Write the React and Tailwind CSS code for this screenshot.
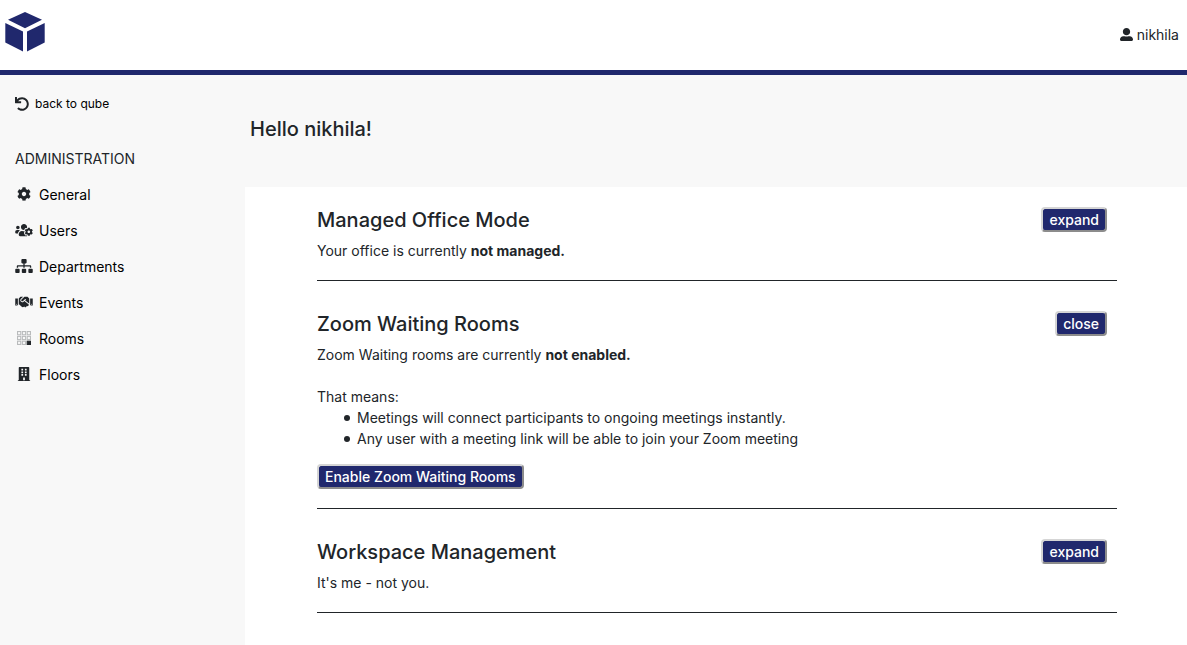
import React from 'react';
import { FaUndo, FaUserAlt, FaCog, FaUsersCog, FaSitemap, FaHandshake, FaBuilding } from 'react-icons/fa';

function Logo() {
  return (
    <svg viewBox="0 0 40 40" className="size-10 fill-[#20286d]" aria-hidden="true">
      <path d="M20 0 37 7.8 20 16.2 3 7.8Z" />
      <path d="M0.3 11 18 19.6V39.6L0.3 30.4Z" />
      <path d="M39.7 11 22 19.6V39.6L39.7 30.4Z" />
    </svg>
  );
}

function RoomsIcon({ className }) {
  const cells = [0.5, 5, 9.5];
  return (
    <svg viewBox="0 0 13 13" className={className} aria-hidden="true">
      {cells.map((y) =>
        cells.map((x) => {
          const filled = x === 9.5 && y === 9.5;
          return (
            <rect
              key={`${x}-${y}`}
              x={x}
              y={y}
              width="3"
              height="3"
              fill={filled ? '#212529' : 'none'}
              stroke={filled ? '#212529' : '#b9bbbc'}
              strokeWidth="1"
            />
          );
        }),
      )}
    </svg>
  );
}

const links = [
  { label: 'General', Icon: FaCog, size: 'size-[14px]' },
  { label: 'Users', Icon: FaUsersCog, size: 'h-[14px] w-[18px]' },
  { label: 'Departments', Icon: FaSitemap, size: 'h-[14px] w-[18px]' },
  { label: 'Events', Icon: FaHandshake, size: 'h-[14px] w-[18px]' },
  { label: 'Rooms', Icon: RoomsIcon, size: 'size-[14px]' },
  { label: 'Floors', Icon: FaBuilding, size: 'h-[14px] w-[14px]' },
];

function Button({ children }) {
  return (
    <button
      type="button"
      className="h-[25px] shrink-0 rounded border-2 border-t-[#d5d5d5] border-r-[#8c8c8c] border-b-[#8c8c8c] border-l-[#d5d5d5] bg-[#20286d] px-[6px] text-sm leading-[21px] font-medium text-white"
    >
      {children}
    </button>
  );
}

function Bullet({ children }) {
  return (
    <li className="flex items-center gap-[7px]">
      <span className="size-[6px] rounded-full bg-[#212529]" />
      {children}
    </li>
  );
}

function Section({ title, action, children }) {
  return (
    <section className="border-b border-[#212529] pt-[30px] pb-[19px] first:pt-5">
      <div className="mb-[7px] flex h-[26px] items-start justify-between pr-[10px]">
        <h2 className="text-xl leading-[27px] font-medium">{title}</h2>
        <Button>{action}</Button>
      </div>
      {children}
    </section>
  );
}

export default function App() {
  return (
    <div className="flex min-h-screen flex-col bg-[#f8f8f8] font-['Inter','Liberation_Sans',sans-serif] text-sm leading-[21px] text-[#212529]">
      <header className="flex h-[75px] items-center justify-between border-b-[5px] border-[#20286d] bg-white pr-2 pb-[6px] pl-[5px]">
        <a href="#home" aria-label="qube">
          <Logo />
        </a>
        <a href="#profile" className="flex items-center gap-1 pt-1">
          <FaUserAlt className="size-[13px]" />
          nikhila
        </a>
      </header>
      <div className="flex flex-1">
        <aside className="w-[245px] shrink-0 px-[15px] pt-[18px]">
          <a href="#qube" className="flex items-center gap-[6px] text-xs leading-[21px] text-black">
            <FaUndo className="size-[14px] text-[#212529]" />
            back to qube
          </a>
          <h3 className="mt-[34px] mb-[7px]">ADMINISTRATION</h3>
          <nav>
            <ul>
              {links.map(({ label, Icon, size }) => (
                <li key={label}>
                  <a href={`#${label.toLowerCase()}`} className="flex h-9 items-center gap-[6px] text-black">
                    <span className="flex w-[18px] justify-center text-[#212529]">
                      <Icon className={size} />
                    </span>
                    {label}
                  </a>
                </li>
              ))}
            </ul>
          </nav>
        </aside>
        <main className="flex min-w-0 flex-1 flex-col">
          <h1 className="h-28 pt-[41px] pl-[5px] text-xl leading-[26px] font-medium">Hello nikhila!</h1>
          <div className="flex-1 bg-white pr-[70px] pl-[72px]">
            <Section title="Managed Office Mode" action="expand">
              <p>
                Your office is currently <strong>not managed.</strong>
              </p>
            </Section>
            <Section title="Zoom Waiting Rooms" action="close">
              <p className="mb-[21px]">
                Zoom Waiting rooms are currently <strong>not enabled.</strong>
              </p>
              <p>That means:</p>
              <ul className="mb-[15px] pl-[27px]">
                <Bullet>Meetings will connect participants to ongoing meetings instantly.</Bullet>
                <Bullet>Any user with a meeting link will be able to join your Zoom meeting</Bullet>
              </ul>
              <div className="flex">
                <Button>Enable Zoom Waiting Rooms</Button>
              </div>
            </Section>
            <Section title="Workspace Management" action="expand">
              <p>It's me - not you.</p>
            </Section>
          </div>
        </main>
      </div>
    </div>
  );
}
